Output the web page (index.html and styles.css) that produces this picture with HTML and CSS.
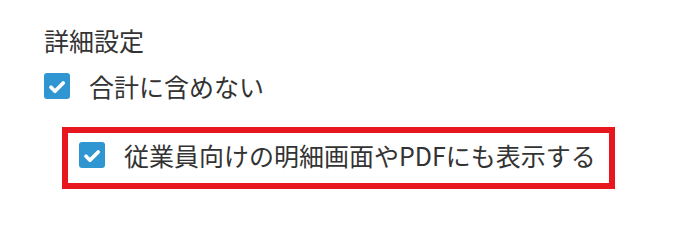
FILE: index.html
```html
<!DOCTYPE html>
<html lang="ja">
<head>
<meta charset="utf-8">
<link rel="stylesheet" href="styles.css">
</head>
<body>
<div class="settings">
  <div class="heading">詳細設定</div>
  <label class="row">
    <span class="check"><svg viewBox="0 0 26 26" width="26" height="26"><rect width="26" height="26" rx="3" fill="#2f96d2"/><path d="M7 14.3 L11 18.3 L19.2 10" fill="none" stroke="#fff" stroke-width="3.7" stroke-linecap="round" stroke-linejoin="round"/></svg></span>
    <span class="text">合計に含めない</span>
  </label>
  <div class="highlight">
    <label class="row">
      <span class="check"><svg viewBox="0 0 26 26" width="26" height="26"><rect width="26" height="26" rx="3" fill="#2f96d2"/><path d="M7 14.3 L11 18.3 L19.2 10" fill="none" stroke="#fff" stroke-width="3.7" stroke-linecap="round" stroke-linejoin="round"/></svg></span>
      <span class="text">従業員向けの明細画面やPDFにも表示する</span>
    </label>
  </div>
</div>
</body>
</html>
```
FILE: styles.css
```css
html, body {
  margin: 0;
  padding: 0;
  background: #fff;
}
body {
  font-family: "Noto Sans CJK JP", "Noto Sans", sans-serif;
  color: #333;
  font-size: 25px;
  line-height: 36px;
}
.settings {
  padding: 22px 0 0 44px;
  display: flex;
  flex-direction: column;
  align-items: flex-start;
}
.heading {
  height: 36px;
}
.row {
  display: flex;
  align-items: center;
  gap: 19px;
  height: 36px;
}
.settings > .row {
  margin-top: 10px;
}
.check {
  display: block;
  width: 26px;
  height: 26px;
}
.check svg {
  display: block;
}
.text {
  white-space: nowrap;
}
.highlight {
  margin: 23px 0 0 18px;
  border: 6px solid #e8171f;
  padding: 4px 13px 10px 11px;
}
```
